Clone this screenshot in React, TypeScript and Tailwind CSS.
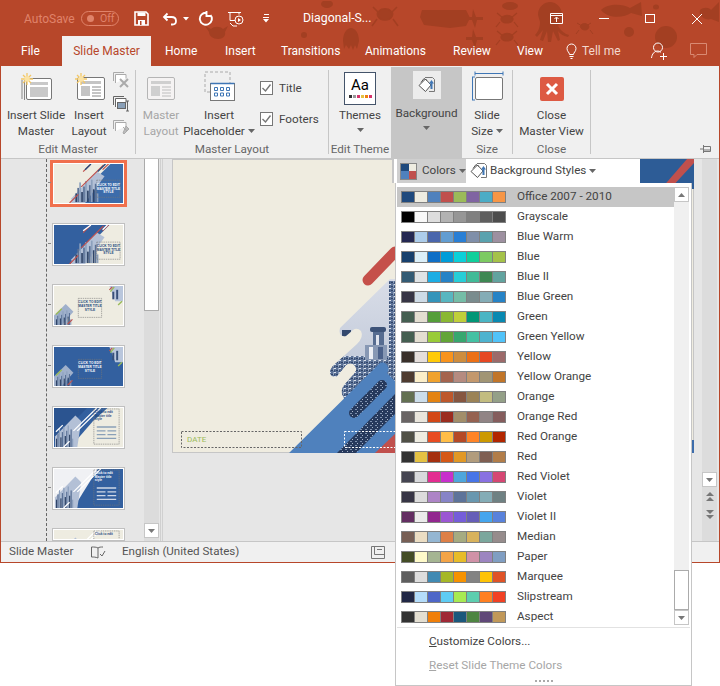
const themes: { name: string; colors: string[] }[] = [
  { name: "Office 2007 - 2010", colors: ["#1f497d", "#eeece1", "#4f81bd", "#c0504d", "#9bbb59", "#8064a2", "#4bacc6", "#f79646"] },
  { name: "Grayscale", colors: ["#000000", "#f8f8f8", "#dddddd", "#b2b2b2", "#969696", "#808080", "#5f5f5f", "#4d4d4d"] },
  { name: "Blue Warm", colors: ["#242852", "#acccea", "#4a66ac", "#629dd1", "#297fd5", "#7f8fa9", "#5aa2ae", "#9d90a0"] },
  { name: "Blue", colors: ["#17406d", "#dbeff9", "#0f6fc6", "#009dd9", "#0bd0d9", "#10cf9b", "#7cca62", "#a5c249"] },
  { name: "Blue II", colors: ["#335b74", "#dfe3e5", "#1cade4", "#2683c6", "#27ced7", "#42ba97", "#3e8853", "#62a39f"] },
  { name: "Blue Green", colors: ["#373545", "#cedbe6", "#3494ba", "#58b6c0", "#75bda7", "#7a8c8e", "#84acb6", "#2683c6"] },
  { name: "Green", colors: ["#455f51", "#e3ded1", "#549e39", "#8ab833", "#c0cf3a", "#029676", "#4ab5c4", "#0989b1"] },
  { name: "Green Yellow", colors: ["#455f51", "#e3ded1", "#99cb38", "#63a537", "#37a76f", "#44c1a3", "#4eb3cf", "#51c3f9"] },
  { name: "Yellow", colors: ["#39302a", "#e5dedb", "#ffca08", "#f8931d", "#ce8d3e", "#ec7016", "#e64823", "#9c6a6a"] },
  { name: "Yellow Orange", colors: ["#4e3b30", "#fbeec9", "#f0a22e", "#a5644e", "#b58b80", "#c3986d", "#a19574", "#c17529"] },
  { name: "Orange", colors: ["#637052", "#ccddea", "#e48312", "#bd582c", "#865640", "#9b8357", "#c2bc80", "#94a088"] },
  { name: "Orange Red", colors: ["#696464", "#e9e5dc", "#d34817", "#9b2d1f", "#a28e6a", "#956251", "#918485", "#855d5d"] },
  { name: "Red Orange", colors: ["#505046", "#eeece1", "#e84c22", "#ffbd47", "#b64926", "#ff8427", "#cc9900", "#b22600"] },
  { name: "Red", colors: ["#323232", "#e5c243", "#a5300f", "#d55816", "#e19825", "#b19c7d", "#7f5f52", "#b27d49"] },
  { name: "Red Violet", colors: ["#454551", "#d8d9dc", "#e32d91", "#c830cc", "#4ea6dc", "#4775e7", "#8971e1", "#d54773"] },
  { name: "Violet", colors: ["#373545", "#dcdcdc", "#ad84c6", "#8784c7", "#5d739a", "#6997af", "#84acb6", "#6f8183"] },
  { name: "Violet II", colors: ["#632e62", "#ebebeb", "#92278f", "#9b57d3", "#755dd9", "#665eb8", "#45a5ed", "#5982db"] },
  { name: "Median", colors: ["#775f55", "#ebddc3", "#94b6d2", "#dd8047", "#a5ab81", "#d8b25c", "#7ba79d", "#968c8c"] },
  { name: "Paper", colors: ["#444d26", "#fefac9", "#a5b592", "#f3a447", "#e7bc29", "#d092a7", "#9c85c0", "#809ec2"] },
  { name: "Marquee", colors: ["#5e5e5e", "#dddddd", "#418ab3", "#a6b727", "#f69200", "#838383", "#fec306", "#df5327"] },
  { name: "Slipstream", colors: ["#212745", "#b4dcfa", "#4e67c8", "#5eccf3", "#a7ea52", "#5dceaf", "#ff8021", "#f14124"] },
  { name: "Aspect", colors: ["#323232", "#e3ded1", "#f07f09", "#9f2936", "#1b587c", "#4e8542", "#604878", "#c19859"] },
];

function Caret({ className = "" }: { className?: string }) {
  return (
    <svg width="7" height="4" viewBox="0 0 7 4" className={className}>
      <path d="M0 0h7L3.5 4z" fill="#666" />
    </svg>
  );
}

function TitlePattern() {
  return (
    <svg className="absolute left-0 top-0" width="718" height="65" viewBox="0 0 718 65" fill="#a33f22">
      <ellipse cx="326" cy="3" rx="6" ry="4" />
      <circle cx="303" cy="34" r="3" />
      <path d="M342 40c0-8 4-13 8-13s8 5 8 13l-2 8-2-4-2 5-2-5-2 4-3-4-2 4z" />
      <path d="M210 28c3-3 9-3 12 0l5-3-3 6c1 4-2 7-7 7s-9-3-9-7l-4-6z" />
      <path d="M378 10c3-3 9-3 12 0 3 2 2 9-6 9s-9-7-6-9zM372 6l6 6M396 6l-6 6M376 18l-5 7M392 18l5 7" stroke="#a33f22" strokeWidth="1.5" />
      <path d="M421 9h44l4 8-4 8-16 2-26-3-4-8z" />
      <path d="M472 8l3 8h7v3h-6l-2 8-3-8h-6v-3h6zM472 28l3 8h7v3h-6l-2 8-3-8h-6v-3h6z" />
      <path d="M501 16c3-2 7-2 10 0 2 2 1 6-5 6s-7-4-5-6zM496 12l6 5M516 12l-6 5M499 21l-4 5M513 21l4 5" stroke="#a33f22" strokeWidth="1.2" />
      <path d="M501 34c3-2 7-2 10 0 2 2 1 6-5 6s-7-4-5-6zM496 30l6 5M516 30l-6 5M499 39l-4 5M513 39l4 5" stroke="#a33f22" strokeWidth="1.2" />
      <ellipse cx="509" cy="5" rx="8" ry="4" />
      <path d="M537 14c0-9 7-13 12-13s12 4 12 13c0 6-2 9-4 11 3 5 7 8 11 9l-1 2c-5-1-8-3-10-6l2 9-2 1-5-10-2 11h-3l-1-11-4 10-3-1 3-10-6 7-2-2c4-4 5-9 5-13z" />
      <path d="M600 9c6-6 20-7 29-2l11-6 1 14-11-3c-7 5-23 6-30-3z" />
      <ellipse cx="655" cy="6" rx="3" ry="2.5" />
      <circle cx="628" cy="31" r="5" />
      <circle cx="665" cy="36" r="11" />
      <path d="M580 24c2-2 5-2 7 0 2 2 0 5-3 5s-6-3-4-5zM576 22l5 3M590 22l-5 3M578 29l-3 4M589 29l3 4" stroke="#a33f22" strokeWidth="1" />
      <path d="M699 9c3-3 9-3 11 0l8-8v20l-8-3c-5 2-13-3-11-9z" />
    </svg>
  );
}

function TitleBar() {
  return (
    <div className="relative flex h-[35px] items-center">
      <span className="ml-[23px] w-[57px] text-[12px] text-[#e0836a]">AutoSave</span>
      <div className="flex h-[15px] w-[38px] items-center rounded-full border border-[#e0836a] pl-[5px]">
        <span className="h-[7px] w-[7px] rounded-full bg-[#e0836a]" />
        <span className="ml-[6px] text-[10.5px] text-[#e0836a]">Off</span>
      </div>
      <svg className="ml-[15px]" width="15" height="15" viewBox="0 0 15 15" fill="none">
        <path d="M1 1h11l2 2v11H1z" stroke="#fff" strokeWidth="1.6" />
        <path d="M3.5 1.5h8v3.5h-8zM4 9h7v5H4z" fill="#fff" />
        <path d="M6 10h1.5v4H6z" fill="#b7472a" />
      </svg>
      <svg className="ml-[13px]" width="16" height="15" viewBox="0 0 16 15" fill="none" stroke="#fff" strokeWidth="1.8">
        <path d="M5.5 2.5 2 6l3.5 3.5M2 6h7.5c3 0 4.5 2 4.5 4s-1.5 3.5-3.5 3.5H9" />
      </svg>
      <svg className="ml-[5px]" width="6" height="4" viewBox="0 0 6 4">
        <path d="M0 0h6L3 3.5z" fill="#fff" />
      </svg>
      <svg className="ml-[9px]" width="15" height="15" viewBox="0 0 15 15" fill="none" stroke="#fff" strokeWidth="1.9">
        <path d="M8.5 1.8a6 6 0 1 0 4 2.2M8.5 0v5H13" />
      </svg>
      <svg className="ml-[15px]" width="17" height="16" viewBox="0 0 17 16" fill="none" stroke="#fff" strokeWidth="1">
        <path d="M0 1.5h13M2 1.5v8h5M11 1.5v2" />
        <circle cx="11" cy="9" r="4" />
        <path d="M10 7v4l3-2z" fill="#fff" stroke="none" />
        <path d="M5 15h4M2 12l3 3" />
      </svg>
      <svg className="ml-[17px]" width="8" height="9" viewBox="0 0 8 9" fill="#fff">
        <path d="M2 0h5v1H2zM1 3h6v1H1zM1 5h6L4 8.5z" />
      </svg>
      <span className="ml-[33px] text-[12.300px] text-white">Diagonal-S...</span>
      <div className="flex-1" />
      <svg className="mr-[36px]" width="13" height="11" viewBox="0 0 13 11" fill="none" stroke="#fff">
        <path d="M.5.5h12v10H.5zM.5 2.5h12M6.5 9V4.500M4.500 6l2-2 2 2" />
      </svg>
      <span className="mr-[36px] h-px w-[10px] bg-white" />
      <span className="mr-[37px] h-[9px] w-[10px] border border-white" />
      <svg className="mr-[17px]" width="10" height="10" viewBox="0 0 10 10" stroke="#fff">
        <path d="M0 0l10 10M10 0 0 10" />
      </svg>
    </div>
  );
}

function Tabs() {
  return (
    <div className="relative flex h-[30px] items-stretch whitespace-nowrap text-[12px] text-white">
      <span className="ml-[20px] flex w-[41px] items-center">File</span>
      <span className="flex w-[89px] items-center justify-center bg-[#f0f0f0] text-[#b7472a]">Slide Master</span>
      <span className="ml-[14px] flex w-[60px] items-center">Home</span>
      <span className="flex w-[56px] items-center">Insert</span>
      <span className="flex w-[84px] items-center">Transitions</span>
      <span className="flex w-[88px] items-center">Animations</span>
      <span className="flex w-[64px] items-center">Review</span>
      <span className="flex w-[49px] items-center">View</span>
      <svg className="self-center" width="11" height="16" viewBox="0 0 11 16" fill="none" stroke="#fff">
        <path d="M3.500 11.500C3.500 9.500 1 8.500 1 5.500a4.500 4.500 0 0 1 9 0c0 3-2.500 4-2.500 6zM3.500 13.500h4M4.500 15.500h2" />
      </svg>
      <span className="ml-[5px] flex w-[69px] items-center text-[#f3d8cf]">Tell me</span>
      <svg className="self-center" width="17" height="18" viewBox="0 0 17 18" fill="none" stroke="#fff">
        <circle cx="7" cy="5.500" r="4.500" />
        <path d="M.5 16c.5-4 3-7 6-7 1.500 0 2.500.5 3.500 1.500M9 14.500h7M12.500 11v7" />
      </svg>
      <svg className="ml-[22px] self-center" width="17" height="16" viewBox="0 0 17 16" fill="none" stroke="#d98a73">
        <path d="M.5.5h16v11H7l-3 3v-3H.5z" />
      </svg>
    </div>
  );
}

function BigButton({
  width,
  icon,
  lines,
  caret,
  muted,
}: {
  width: string;
  icon: React.ReactNode;
  lines: string[];
  caret?: boolean;
  muted?: boolean;
}) {
  return (
    <div className={`flex flex-col items-center ${width}`}>
      <div className="flex h-[41px] items-end justify-center pb-[6px]">{icon}</div>
      <div className={`text-center text-[11.700px] leading-[16px] whitespace-nowrap ${muted ? "text-[#a6a6a6]" : "text-[#444]"}`}>
        {lines.map((l, i) => (
          <div key={l} className="flex items-center justify-center gap-[3px]">
            {l}
            {caret && i === lines.length - 1 ? <Caret /> : null}
          </div>
        ))}
      </div>
    </div>
  );
}

function Sun({ x, y }: { x: number; y: number }) {
  return (
    <g transform={`translate(${x} ${y})`} stroke="#f3c766" strokeWidth="1.3">
      <path d="M0-6V6M-6 0H6M-4-4l8 8M4-4l-8 8" />
      <circle r="2.800" fill="#fbe3a5" stroke="none" />
    </g>
  );
}

function InsertSlideIcon() {
  return (
    <svg width="33" height="29" viewBox="0 0 33 29" fill="none">
      <path d="M2 8v19M4.500 6v22" stroke="#888" />
      <rect x="6.500" y="6.500" width="25" height="21" rx="1.500" fill="#fff" stroke="#777" />
      <rect x="10" y="10" width="18" height="3" fill="#c9c9c9" />
      <rect x="10" y="15" width="18" height="10" fill="#c9c9c9" />
      <Sun x={7} y={7} />
    </svg>
  );
}

function LayoutIcon({ muted }: { muted?: boolean }) {
  const c = muted ? "#cfcfcf" : "#c4c4c4";
  const l = muted ? "#bdbdbd" : "#8a8a8a";
  return (
    <svg width="28" height="24" viewBox="0 0 28 24" fill="none">
      <rect x=".5" y=".5" width="27" height="22" rx="1.500" fill={muted ? "#f5f3f3" : "#fff"} stroke={muted ? "#b5b5b5" : "#777"} />
      <rect x="4" y="4" width="20" height="3" fill={c} />
      <rect x="4" y="9" width="9" height="10" fill={c} />
      <path d="M15 10h9M15 13h9M15 16h9M15 19h9" stroke={l} />
    </svg>
  );
}

function InsertLayoutIcon() {
  return (
    <div className="relative h-[29px] w-[31px]">
      <div className="absolute bottom-0 right-0">
        <LayoutIcon />
      </div>
      <svg className="absolute left-0 top-0" width="14" height="14" viewBox="0 0 14 14">
        <Sun x={7} y={7} />
      </svg>
    </div>
  );
}

function SmallSlideIcon({ kind }: { kind: "x" | "rename" | "pin" }) {
  const faded = kind !== "rename";
  const s = faded ? "#aaa" : "#666";
  return (
    <svg width="17" height="16" viewBox="0 0 17 16" fill="none" stroke={s}>
      <path d="M.5 9V.5H11" />
      <path d="M2.500 11V2.500H13v4" fill="#fff" />
      {kind === "x" ? <path d="M7 7l8 8M15 7l-8 8" strokeWidth="2" stroke="#aaa" /> : null}
      {kind === "rename" ? (
        <g>
          <rect x="4.500" y="6.500" width="8" height="6" fill="#8aa0b8" stroke="#666" />
          <path d="M13 5h3M13 15h3M14.500 5v10" />
        </g>
      ) : null}
      {kind === "pin" ? <path d="M10 7l4 4M13 6l3 3-5 5-1-1z" fill="#bbb" /> : null}
    </svg>
  );
}

function BucketIcon() {
  return (
    <svg width="17" height="18" viewBox="0 0 17 18" fill="none">
      <path d="M7 1.500h7.500l2 2v12H11" stroke="#777" />
      <path d="M1 9.500 7.500 3l5.500 6-5.500 6.500z" fill="#fff" stroke="#555" />
      <path d="M3 6.500 6 2.500l3 2" stroke="#555" />
      <path d="M13.500 6v7" stroke="#3f76b5" strokeWidth="2" />
      <path d="M11 7.500 13.500 4 16 7.500z" fill="#3f76b5" />
    </svg>
  );
}

function Check({ label }: { label: string }) {
  return (
    <div className="flex h-[14px] items-center">
      <svg width="13" height="14" viewBox="0 0 13 14" fill="none">
        <rect x=".5" y=".5" width="12" height="13" fill="#fff" stroke="#777" />
        <path d="M2.500 7l3 3 5-6.500" stroke="#777" strokeWidth="1.400" />
      </svg>
      <span className="ml-[6px] text-[11.700px] leading-[14px] text-[#444]">{label}</span>
    </div>
  );
}

function GroupLabel({ children }: { children: string }) {
  return <div className="flex h-[16px] items-center justify-center whitespace-nowrap text-[11.700px] text-[#666]">{children}</div>;
}

function Sep() {
  return <div className="my-[4px] w-px self-stretch bg-[#c6c6c6]" />;
}

function Ribbon() {
  return (
    <div className="relative flex h-[93px] border-b border-[#c6c6c6] bg-[#f0f0f0]">
      <div className="flex w-[134px] flex-col">
        <div className="flex h-[76px] pl-[5px]">
          <BigButton width="w-[60px]" icon={<InsertSlideIcon />} lines={["Insert Slide", "Master"]} />
          <BigButton width="w-[46px]" icon={<InsertLayoutIcon />} lines={["Insert", "Layout"]} />
          <div className="ml-[1px] flex flex-col gap-[8px] pt-[6px]">
            <SmallSlideIcon kind="x" />
            <SmallSlideIcon kind="rename" />
            <SmallSlideIcon kind="pin" />
          </div>
        </div>
        <GroupLabel>Edit Master</GroupLabel>
      </div>
      <Sep />
      <div className="flex w-[192px] flex-col">
        <div className="flex h-[76px] pl-[3px]">
          <BigButton width="w-[44px]" muted icon={<LayoutIcon muted />} lines={["Master", "Layout"]} />
          <BigButton
            width="w-[72px]"
            caret
            icon={
              <svg width="31" height="30" viewBox="0 0 31 30" fill="none">
                <path d="M1 1h25v20H1z" stroke="#aaa" strokeDasharray="3 2" />
                <rect x="6.500" y="12.500" width="24" height="17" fill="#fff" stroke="#777" />
                <path d="M6.500 12.500h24" stroke="#3f76b5" strokeWidth="1.500" />
                <path d="M10.500 16.500h3v3h-3zM16.500 16.500h3v3h-3zM22.500 16.500h3v3h-3zM10.500 22h3v3h-3zM16.500 22h3v3h-3zM22.500 22h3v3h-3z" stroke="#3f76b5" />
              </svg>
            }
            lines={["Insert", "Placeholder"]}
          />
          <div className="ml-[5px] flex flex-col gap-[17px] pt-[15px]">
            <Check label="Title" />
            <Check label="Footers" />
          </div>
        </div>
        <GroupLabel>Master Layout</GroupLabel>
      </div>
      <Sep />
      <div className="flex w-[62px] flex-col">
        <div className="flex h-[76px] justify-center">
          <div className="flex w-[48px] flex-col items-center pt-[6px]">
            <div className="relative flex h-[33px] w-[32px] flex-col items-center border border-[#44546a] bg-white">
              <span className="mt-[3px] text-[15px] leading-[18px] text-black">Aa</span>
              <div className="mt-[1px] flex gap-px">
                <span className="h-[3px] w-[3px] bg-[#333]" />
                <span className="h-[3px] w-[3px] bg-[#999]" />
                <span className="h-[3px] w-[3px] bg-[#d6336c]" />
                <span className="h-[3px] w-[3px] bg-[#e5c243]" />
                <span className="h-[3px] w-[3px] bg-[#f07f09]" />
                <span className="h-[3px] w-[3px] bg-[#d6336c]" />
              </div>
            </div>
            <div className="mt-[2px] text-[11.700px] leading-[16px] text-[#444]">Themes</div>
            <Caret className="mt-[5px]" />
          </div>
        </div>
        <GroupLabel>Edit Theme</GroupLabel>
      </div>
      <div className="flex h-[91px] w-[71px] flex-col items-center self-end bg-[#c6c6c6] pt-[4px]">
        <div className="flex h-[28px] w-[28px] items-center justify-center bg-[#ececec]">
          <BucketIcon />
        </div>
        <div className="mt-[6px] text-[11.700px] leading-[16px] text-[#444]">Background</div>
        <Caret className="mt-[5px]" />
      </div>
      <div className="flex w-[50px] flex-col">
        <div className="flex h-[76px] justify-center">
          <BigButton
            width="w-[50px]"
            caret
            icon={
              <svg width="33" height="30" viewBox="0 0 33 30" fill="none">
                <rect x="4.500" y="6.500" width="27" height="22" rx="1.500" fill="#fff" stroke="#777" />
                <path d="M4 2.500h28M4 .5v4M32 .5v4M1 6h3M1 29h3M1.500 6v23" stroke="#3f76b5" />
              </svg>
            }
            lines={["Slide", "Size"]}
          />
        </div>
        <GroupLabel>Size</GroupLabel>
      </div>
      <Sep />
      <div className="flex w-[77px] flex-col">
        <div className="flex h-[76px] justify-center">
          <BigButton
            width="w-[77px]"
            icon={
              <svg width="24" height="24" viewBox="0 0 24 24">
                <rect width="24" height="24" rx="2" fill="#dd5a43" />
                <path d="M7 7l10 10M17 7 7 17" stroke="#fff" strokeWidth="3" />
              </svg>
            }
            lines={["Close", "Master View"]}
          />
        </div>
        <GroupLabel>Close</GroupLabel>
      </div>
      <Sep />
      <div className="flex-1" />
      <svg className="mb-[5px] mr-[8px] self-end" width="11" height="8" viewBox="0 0 11 8" fill="none" stroke="#777">
        <path d="M0 4h3M3.500 1.500h7v5h-7zM4 5h6M3.500 0v8" />
      </svg>
    </div>
  );
}

function City({ x, y, w, h }: { x: number; y: number; w: number; h: number }) {
  const bars = [];
  for (let i = 0; i < 12; i++) {
    const bh = h * (0.35 + ((i * 37) % 11) / 18);
    bars.push(<rect key={i} x={x + (i * w) / 12} y={y + h - bh} width={w / 14} height={bh} fill={i % 3 === 0 ? "#2f4468" : i % 3 === 1 ? "#5a7196" : "#8ca0bd"} />);
  }
  return <g>{bars}</g>;
}

function Thumb({ variant, selected, clipped }: { variant: number; selected?: boolean; clipped?: boolean }) {
  const blue = variant === 1 || variant === 3 || variant === 4;
  const beige = "#eeece1";
  const bg = variant === 5 ? "#f0f1f4" : blue ? "#33609f" : beige;
  const side = variant === 3 || variant === 4 || variant === 5 || variant === 6;
  const center = variant === 2 || variant === 3;
  const text = variant === 0 || variant === 3 ? "#fff" : variant === 5 ? "#fff" : "#23487c";
  const id = `t${variant}`;
  const tx = center ? 37 : side ? 42 : 56;
  const lines = side && !center ? ["Click to edit", "Master title", "style"] : ["CLICK TO EDIT", "MASTER TITLE", "STYLE"];
  const ty = center ? 18 : side ? 5 : 23;
  const shown = clipped ? lines.slice(0, 1) : lines;
  return (
    <div className={selected ? "border-[3px] border-[#f0704d] bg-white p-px" : "border border-[#c0c0c0] bg-white p-px"}>
      <svg className="block" width="69" height={clipped ? 9 : 39} viewBox={`0 0 71 ${clipped ? 9.500 : 41}`} preserveAspectRatio="none">
        <defs>
          <clipPath id={id}>
            <rect width="71" height="41" />
          </clipPath>
        </defs>
        <g clipPath={`url(#${id})`}>
          <rect width="71" height="41" fill={bg} />
          {variant === 0 ? <path d="M18 41 58 0h13v41z" fill="#3c6cab" /> : null}
          {variant === 1 ? <path d="M17 41 57 0h14v41z" fill={beige} /> : null}
          {variant === 4 ? <path d="M17 41 40 14 55 0h16v41z" fill={beige} /> : null}
          {variant === 4 ? <path d="M0 0h34L3 32 0 35z" fill="#2b5490" /> : null}
          {variant === 5 ? <path d="M20 41 45 0h26v41z" fill="#33609f" /> : null}
          {center ? (
            <g>
              <path d="M57 0h14v16l-8 0z" fill="#b9c6dc" />
              <rect x="60" y="6" width="2" height="8" fill="#37507a" />
              <rect x="64" y="4" width="2" height="10" fill="#37507a" />
              <path d="M0 31 12 19l8 8-12 14H0z" fill="#9fb0cb" />
              <City x={2} y={24} w={16} h={17} />
              <path d="M2 30 8 24M58 6l4-5M66 20l4-4" stroke="#9bbb59" strokeWidth="1.400" />
              <path d="M14 40l5-5M57 4l3-3" stroke="#c0504d" strokeWidth="1.200" />
            </g>
          ) : (
            <g>
              <path d={side ? "M1 30 22 8l6 6-4 27H1z" : "M18 36 44 8l8 5-20 28H18z"} fill="#b3c0d6" />
              <City x={side ? 2 : 22} y={side ? 16 : 14} w={side ? 18 : 24} h={side ? 25 : 26} />
              {side ? (
                <path d="M2 25l7-7M10 41l6-6M20 24 44 0M24 24 48 0" stroke="#fff" strokeWidth="1.300" />
              ) : (
                <path d="M28 24 51 1M30 8l7-7M50 6l7-7M16 41l9-9" stroke="#c0504d" strokeWidth="1.200" />
              )}
              {variant === 0 ? <path d="M45 8 53 0M32 6l6-6" stroke="#23487c" strokeWidth="1.400" /> : null}
              {variant === 1 ? <path d="M30 6l8-6M50 5l5-5" stroke="#fff" strokeWidth="1.400" /> : null}
            </g>
          )}
          <rect
            x={center ? 25 : side ? 41 : 44}
            y={center ? 13 : side ? 1 : variant === 0 ? 17 : 18}
            width={center ? 24 : side ? 26 : 24}
            height={center ? 20 : side ? 37 : 18}
            fill="none"
            stroke="#777"
            strokeWidth=".6"
            strokeDasharray="1.500 .8"
          />
          {shown.map((l, i) => (
            <text key={l} x={tx} y={ty + i * 4} fontSize="3.300" fontWeight="700" fill={text} textAnchor={side && !center ? "start" : "middle"} fontFamily="Liberation Sans, sans-serif">
              {l}
            </text>
          ))}
          {side && !center ? (
            <path d="M44 20h20M44 24h9M55 24h9M44 28h9M55 28h9M44 32h20" stroke={variant === 4 ? "#8aa0b8" : "#cfd8e6"} strokeWidth="1.400" />
          ) : null}
        </g>
      </svg>
    </div>
  );
}

function ScrollBtn({ className = "" }: { className?: string }) {
  return (
    <div className={`flex h-[15px] w-[15px] items-center justify-center border border-[#c6c6c6] bg-white ${className}`}>
      <svg width="7" height="4" viewBox="0 0 7 4">
        <path d="M0 0h7L3.500 4z" fill="#777" />
      </svg>
    </div>
  );
}

function SlidePane() {
  return (
    <div className="flex w-[143px] bg-[#e6e6e6]">
      <div className="relative w-[46px] shrink-0">
        <div className="absolute bottom-0 right-0 top-0 border-r border-dashed border-[#666]" />
        {[23, 84, 145, 206, 267, 328].map((t) => (
          <span key={t} className="absolute right-[-4px] h-px w-[3px] bg-[#888]" style={{ top: t }} />
        ))}
      </div>
      <div className="flex flex-1 flex-col items-start pl-[3px] pt-[1px]">
        <Thumb variant={0} selected />
        <div className="flex flex-col gap-[18px] pl-[2px] pt-[16px]">
          {[1, 2, 3, 4, 5].map((v) => (
            <Thumb key={v} variant={v} />
          ))}
          <Thumb variant={6} clipped />
        </div>
      </div>
    </div>
  );
}

function SlideCanvas() {
  const beige = "#efece0";
  const cityShape =
    "M341 328 L391 279 H397 V415 H352 L343 394 Q342 388 346 384 L355 374 Q360 368 354 364 Q350 362 347 365 L338 376 Q333 378 331 373 Q331 369 335 365 L358 344 Q365 337 362 331 Q358 327 354 330 L347 336 Q343 337 341 334 Q340 331 341 328 Z";
  return (
    <svg className="block" width="522" height="294" viewBox="173 159 522 294">
      <defs>
        <linearGradient id="sky" x1="0" y1="0" x2="0" y2="1">
          <stop offset="0" stopColor="#dadee8" />
          <stop offset="1" stopColor="#b4bfd2" />
        </linearGradient>
        <clipPath id="cityClip">
          <path d={cityShape} />
        </clipPath>
        <pattern id="windows" width="5" height="4" patternUnits="userSpaceOnUse">
          <rect width="5" height="4" fill="#5a7095" />
          <rect width="2" height="1" fill="#dbe1ea" />
          <rect x="2" y="2" width="2" height="1" fill="#2f4468" />
          <rect x="4" width="1" height="3" fill="#93a4be" />
          <rect y="2" width="1" height="2" fill="#3c5278" />
        </pattern>
        <pattern id="darkCity" width="5" height="4" patternUnits="userSpaceOnUse">
          <rect width="5" height="4" fill="#26395c" />
          <rect x="1" y="1" width="2" height="1" fill="#7d90ae" />
          <rect x="3" y="3" width="1" height="1" fill="#aab6ca" />
        </pattern>
      </defs>
      <rect x="173.500" y="159.500" width="521" height="293" fill={beige} stroke="#c6c6c6" />
      <path d="M640 159h55v30h-55z" fill="#2d5c96" />
      <path d="M662 189l26-30h7v4l-24 26z" fill="#c0504d" />
      <path d="M692 440h3v13h-3z" fill="#3c6cab" />
      <path d="M369 280 396 252" stroke="#c5504a" strokeWidth="11" strokeLinecap="round" />
      <g clipPath="url(#cityClip)">
        <rect x="330" y="275" width="70" height="145" fill="url(#sky)" />
        <rect x="330" y="356" width="70" height="60" fill="url(#windows)" />
        <rect x="331" y="363" width="40" height="16" fill="url(#windows)" />
        <rect x="343" y="330" width="9" height="7" fill="#33496e" />
        <rect x="371" y="327" width="16" height="5" rx="2" fill="#3d5378" />
        <rect x="374" y="332" width="11" height="14" fill="#566c90" />
        <rect x="377" y="335" width="3" height="10" fill="#dfe4ee" />
        <rect x="366" y="345" width="22" height="15" fill="#8798b4" />
        <rect x="370" y="347" width="4" height="12" fill="#ebeef4" />
        <rect x="379" y="347" width="5" height="12" fill="#4b618a" />
        <rect x="390" y="281" width="6" height="90" fill="url(#windows)" />
      </g>
      <path d="M290 453 381 363Q385 361 388 365 391 369 388 373L397 382V453z" fill="#4f81bd" />
      <path d="M355 413 383 385" stroke="url(#darkCity)" strokeWidth="10" strokeLinecap="round" />
      <path d="M338 453 397 393V413L357 453z" fill="url(#darkCity)" />
      <path d="M376 453 397 433v20z" fill="#c0504d" />
      <rect x="182.500" y="431.500" width="120" height="16" fill="none" stroke="#666" strokeDasharray="2 1.500" />
      <rect x="345.500" y="431.500" width="100" height="16" fill="none" stroke="#fff" strokeDasharray="2 1.500" />
      <text x="188" y="441.500" fontSize="8" fill="#9bbb59">
        DATE
      </text>
    </svg>
  );
}

function Content() {
  return (
    <div className="flex h-[382px] overflow-hidden bg-[#e6e6e6]">
      <SlidePane />
      <div className="flex w-[15px] flex-col bg-[#dcdcdc]">
        <div className="h-[152px] border border-t-0 border-[#ababab] bg-white" />
        <div className="flex-1" />
        <ScrollBtn className="mb-[3px]" />
      </div>
      <div className="ml-[1px] w-[3px] border-x border-[#d0d0d0]" />
      <div className="ml-[9px] w-[522px]">
        <SlideCanvas />
      </div>
      <div className="w-[8px]" />
      <div className="flex w-[15px] flex-col items-center bg-[#dcdcdc]">
        <div className="flex-1" />
        <ScrollBtn />
        <svg className="mt-[5px]" width="8" height="9" viewBox="0 0 8 9" fill="#777">
          <path d="M0 4 4 0l4 4zM0 9l4-4 4 4z" />
        </svg>
        <svg className="mb-[22px] mt-[9px]" width="8" height="9" viewBox="0 0 8 9" fill="#777">
          <path d="M0 0h8L4 4zM0 5h8L4 9z" />
        </svg>
      </div>
    </div>
  );
}

function StatusBar() {
  return (
    <div className="flex h-[21px] items-center border-t border-[#c6c6c6] bg-[#f0f0f0] whitespace-nowrap text-[11.600px] text-[#555]">
      <span className="ml-[8px] w-[82px]">Slide Master</span>
      <svg className="mr-[16px]" width="15" height="13" viewBox="0 0 15 13" fill="none" stroke="#666">
        <path d="M7 2C5.500 1 3 1 .5 1v10c2.500 0 4 0 6.500 1zM7 2c1-1 3-1 5-1M9 8l2 2 3-5" />
      </svg>
      <span className="w-[249px]">English (United States)</span>
      <svg width="14" height="13" viewBox="0 0 14 13" fill="none" stroke="#777">
        <path d="M.5.5h13v12H.5zM3.500.5v8h10M6 3.500h5" />
      </svg>
    </div>
  );
}

function ColorsMenu() {
  return (
    <div className="absolute left-[392px] top-[158px] w-[300px] whitespace-nowrap text-[11.700px] text-[#444]">
      <div className="flex h-[25px] w-[248px] items-stretch border-l-2 border-t border-[#c6c6c6] bg-white pl-[3px] pr-0">
        <div className="flex w-[69px] items-center bg-[#cfcfcf] pl-[3px]">
          <div className="grid h-[17px] w-[17px] grid-cols-2 border border-[#888]">
            <span className="bg-[#1f497d]" />
            <span className="bg-[#eeece1]" />
            <span className="bg-[#4f81bd]" />
            <span className="bg-[#c0504d]" />
          </div>
          <span className="ml-[5px]">Colors</span>
          <Caret className="ml-[3px]" />
        </div>
        <div className="ml-[4px] flex items-center">
          <BucketIcon />
          <span className="ml-[3px]">Background Styles</span>
          <Caret className="ml-[3px]" />
        </div>
      </div>
      <div className="ml-[3px] flex h-[503px] w-[297px] flex-col border-x border-b border-[#c6c6c6] bg-white">
        <div className="flex pl-px pr-[2px] pt-[4px]">
          <div className="w-[277px]">
            {themes.map((t, i) => (
              <div key={t.name} className={`flex h-[20px] items-center pl-[4px] ${i === 0 ? "bg-[#c6c6c6]" : ""}`}>
                <div className="flex h-[12px] w-[105px] gap-px border border-[#808080] bg-[#808080]">
                  {t.colors.map((c, j) => (
                    <span key={j} className="h-full flex-1" style={{ backgroundColor: c }} />
                  ))}
                </div>
                <span className="ml-[11px]">{t.name}</span>
              </div>
            ))}
          </div>
          <div className="flex w-[15px] flex-col bg-[#f0f0f0]">
            <div className="flex h-[15px] items-center justify-center border border-[#c6c6c6] bg-white">
              <svg width="7" height="4" viewBox="0 0 7 4">
                <path d="M0 4h7L3.500 0z" fill="#777" />
              </svg>
            </div>
            <div className="flex-1" />
            <div className="h-[40px] border border-[#ababab] bg-white" />
            <ScrollBtn />
            <div className="h-[2px] bg-white" />
          </div>
        </div>
        <div className="mx-px border-t border-[#e2e2e2]" />
        <div className="flex h-[24px] items-center pl-[33px] pt-[3px]">
          <span>
            <span className="underline">C</span>ustomize Colors...
          </span>
        </div>
        <div className="flex h-[24px] items-center pl-[33px] pt-[3px] text-[#a6a6a6]">
          <span>
            <span className="underline">R</span>eset Slide Theme Colors
          </span>
        </div>
        <div className="flex flex-1 items-center justify-center gap-[2px]">
          {[0, 1, 2, 3, 4].map((d) => (
            <span key={d} className="h-[2px] w-[2px] bg-[#aaa]" />
          ))}
        </div>
      </div>
    </div>
  );
}

export default function App() {
  return (
    <div className="relative h-[686px] w-[720px] overflow-hidden bg-white font-['Roboto',sans-serif]">
      <div className="flex h-[563px] flex-col border border-[#b7472a]">
        <div className="relative bg-[#b7472a]">
          <TitlePattern />
          <TitleBar />
          <Tabs />
        </div>
        <Ribbon />
        <Content />
        <StatusBar />
      </div>
      <ColorsMenu />
    </div>
  );
}
